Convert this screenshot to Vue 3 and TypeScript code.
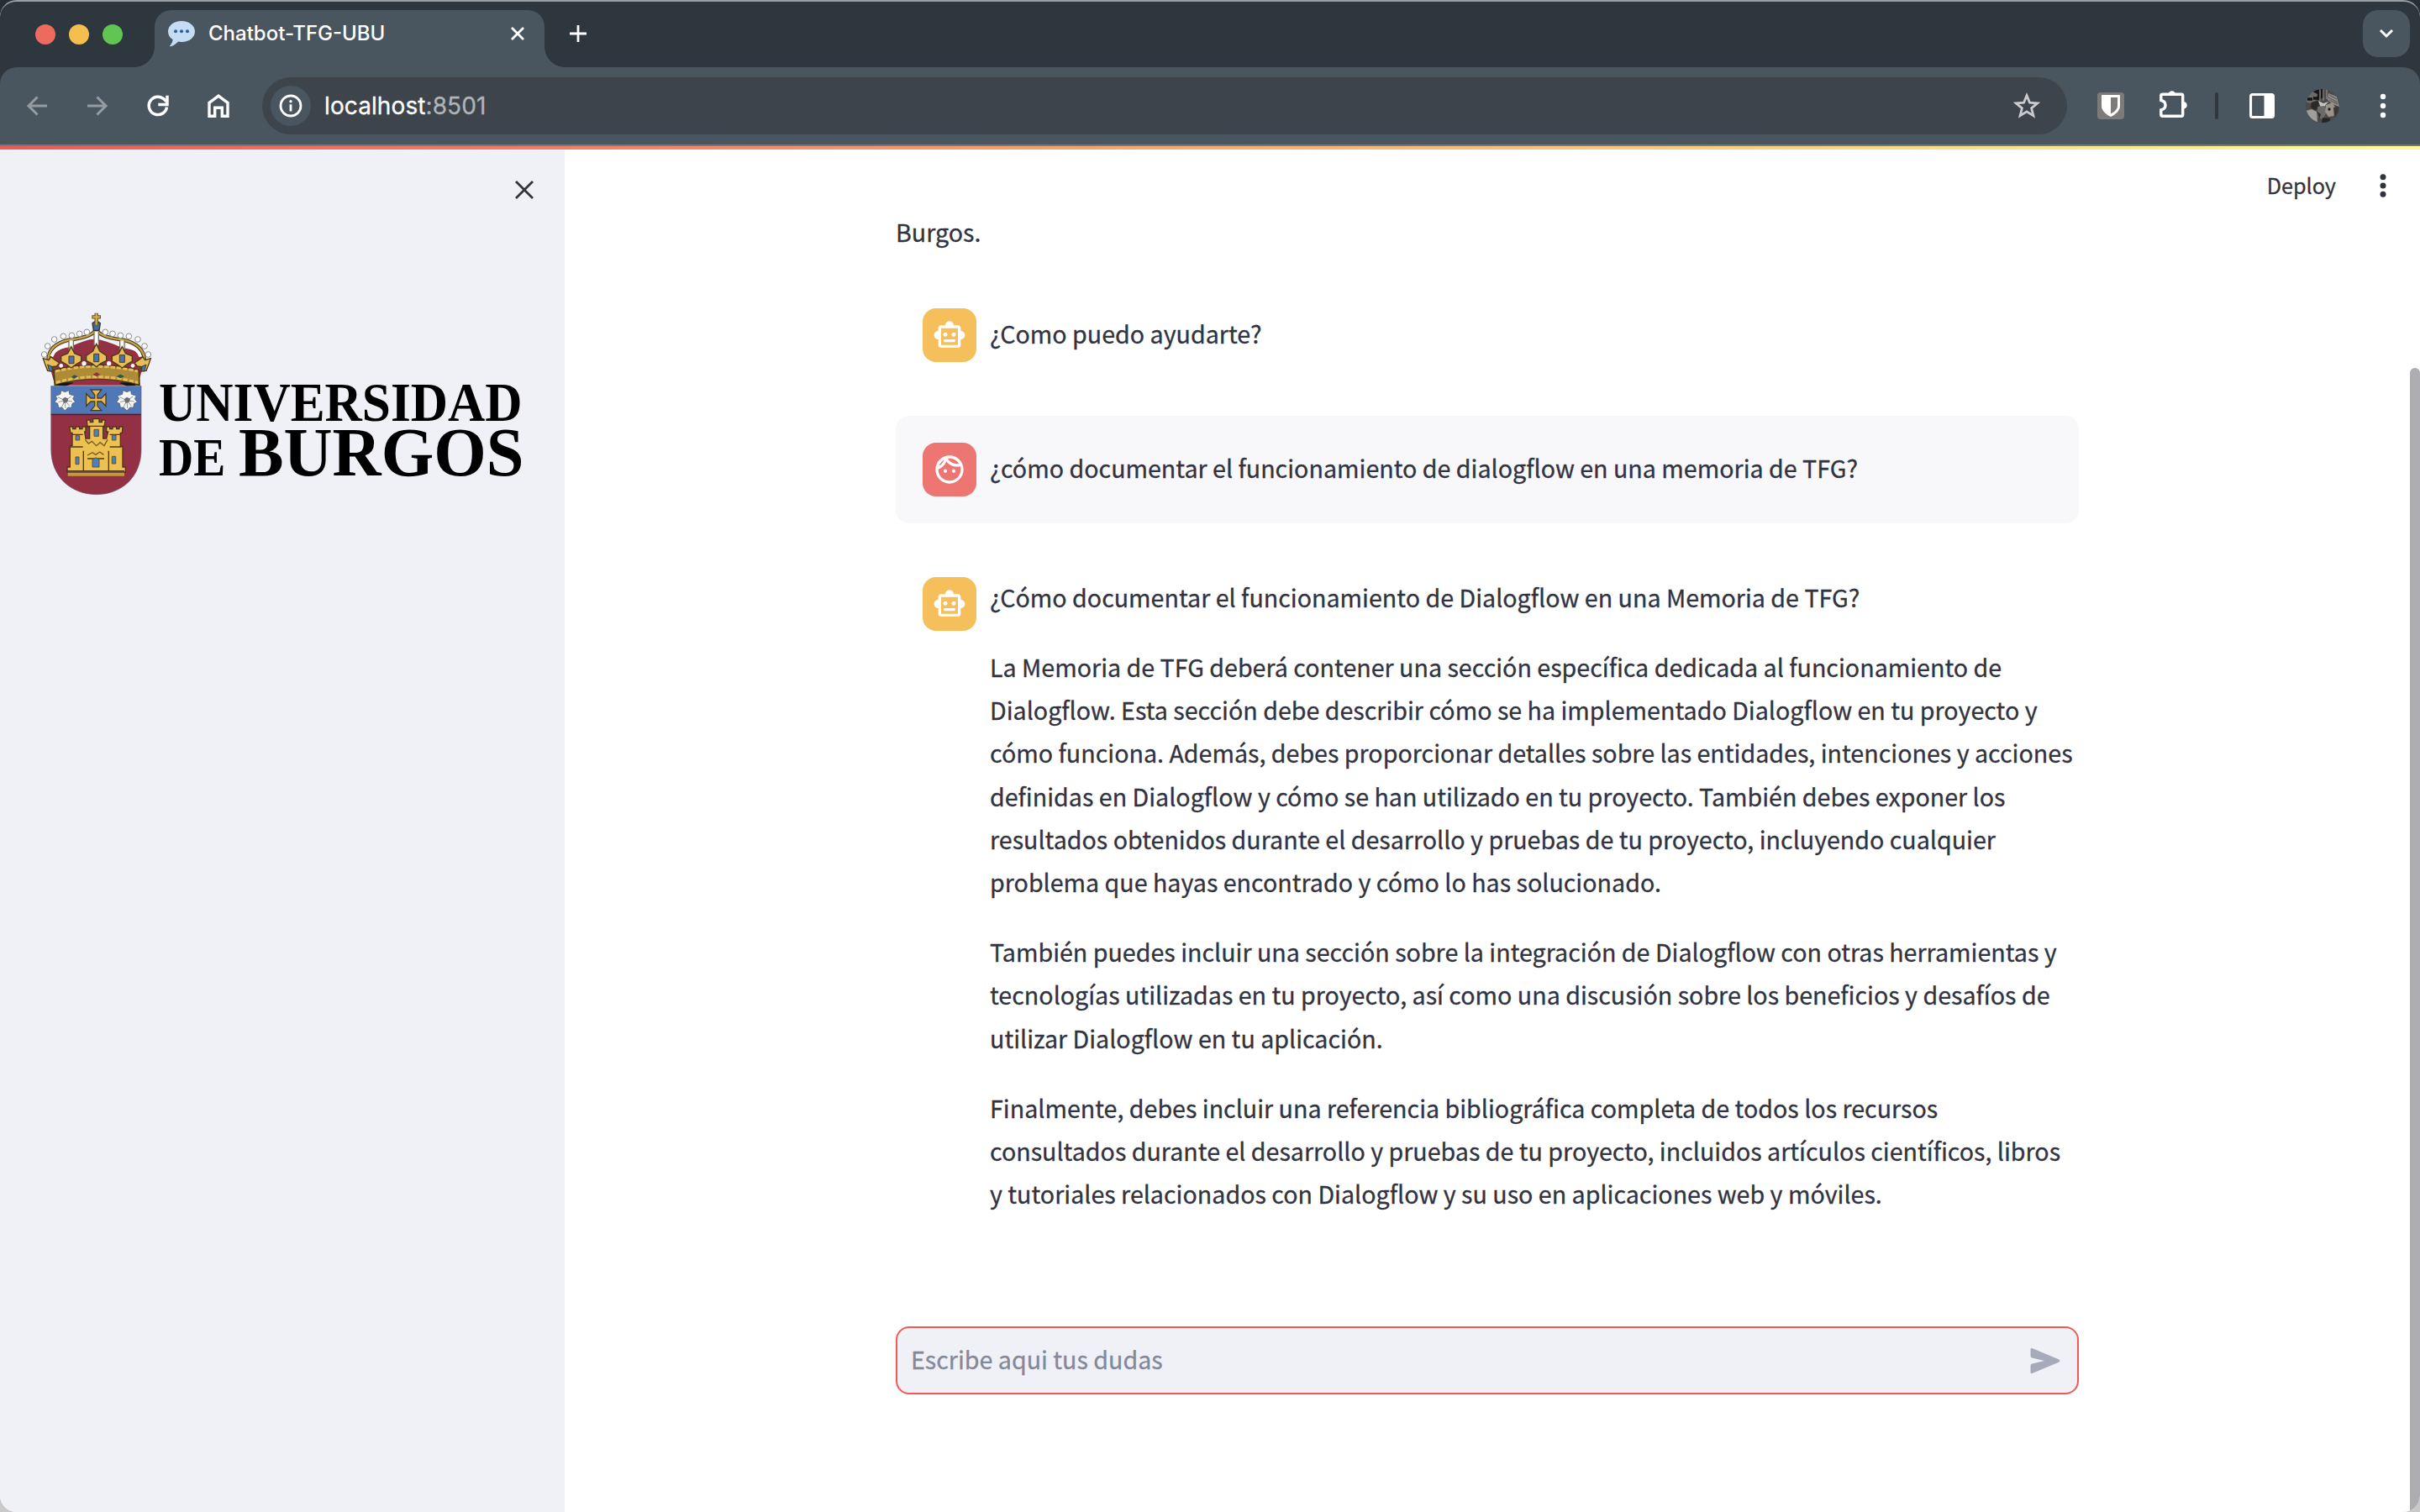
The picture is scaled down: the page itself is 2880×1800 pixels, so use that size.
<script setup lang="ts">
interface Message {
  role: 'assistant' | 'user'
  offset: 'single' | 'multi'
  paragraphs: string[][]
}

const messages: Message[] = [
  { role: 'assistant', offset: 'single', paragraphs: [['¿Como puedo ayudarte?']] },
  {
    role: 'user',
    offset: 'single',
    paragraphs: [['¿cómo documentar el funcionamiento de dialogflow en una memoria de TFG?']],
  },
  {
    role: 'assistant',
    offset: 'multi',
    paragraphs: [
      ['¿Cómo documentar el funcionamiento de Dialogflow en una Memoria de TFG?'],
      [
        'La Memoria de TFG deberá contener una sección específica dedicada al funcionamiento de',
        'Dialogflow. Esta sección debe describir cómo se ha implementado Dialogflow en tu proyecto y',
        'cómo funciona. Además, debes proporcionar detalles sobre las entidades, intenciones y acciones',
        'definidas en Dialogflow y cómo se han utilizado en tu proyecto. También debes exponer los',
        'resultados obtenidos durante el desarrollo y pruebas de tu proyecto, incluyendo cualquier',
        'problema que hayas encontrado y cómo lo has solucionado.',
      ],
      [
        'También puedes incluir una sección sobre la integración de Dialogflow con otras herramientas y',
        'tecnologías utilizadas en tu proyecto, así como una discusión sobre los beneficios y desafíos de',
        'utilizar Dialogflow en tu aplicación.',
      ],
      [
        'Finalmente, debes incluir una referencia bibliográfica completa de todos los recursos',
        'consultados durante el desarrollo y pruebas de tu proyecto, incluidos artículos científicos, libros',
        'y tutoriales relacionados con Dialogflow y su uso en aplicaciones web y móviles.',
      ],
    ],
  },
]

// Pearls along the two outer arches of the crown
const pearls: [number, number][] = [
  [70, 216], [82, 186], [106, 162], [138, 151], [168, 148], [196, 142], [222, 136],
  [288, 136], [314, 142], [342, 148], [372, 151], [404, 162], [428, 186], [441, 216],
]
</script>

<template>
  <div class="desktop">
    <div class="window">
      <header class="chrome">
        <div class="tabstrip">
          <div class="lights"><i class="red"></i><i class="yellow"></i><i class="green"></i></div>
          <div class="tab">
            <svg class="favicon" width="34" height="32" viewBox="0 0 34 32">
              <path d="M17 1C8 1 1 6.400 1 13.500c0 4 2 7.300 5.600 9.600C6.500 26 5 28.600 3 30.600c0 .8 1 .9 2 .5 3.600-1.300 6.300-3.300 8-5.500 1.300.2 2.600.4 4 .4 9 0 16-5.500 16-12.500S26 1 17 1z" fill="#c4dcf4" />
              <circle cx="10" cy="13.200" r="2" fill="#2f5c96" /><circle cx="17" cy="13.200" r="2" fill="#2f5c96" /><circle cx="24" cy="13.200" r="2" fill="#2f5c96" />
            </svg>
            <span class="tab-title">Chatbot-TFG-UBU</span>
            <svg class="tab-close" width="18" height="18" viewBox="0 0 18 18"><path d="M2 2l14 14M16 2L2 16" stroke="#fff" stroke-width="2.800" /></svg>
          </div>
          <svg class="new-tab" width="22" height="22" viewBox="0 0 22 22"><path d="M11 1v20M1 11h20" stroke="#fff" stroke-width="2.800" /></svg>
          <div class="tab-search">
            <svg width="20" height="14" viewBox="0 0 20 14"><path d="M3 3l7 7 7-7" fill="none" stroke="#fff" stroke-width="3" /></svg>
          </div>
        </div>
        <div class="toolbar">
          <div class="nav">
            <svg width="28" height="28" viewBox="0 0 28 28"><path d="M26 14H4M14.500 3.500L4 14l10.500 10.500" fill="none" stroke="#949ca2" stroke-width="3" /></svg>
            <svg width="28" height="28" viewBox="0 0 28 28"><path d="M2 14h22M13.500 3.500L24 14 13.500 24.500" fill="none" stroke="#949ca2" stroke-width="3" /></svg>
            <svg width="28" height="28" viewBox="0 0 28 28"><path d="M24.500 15.500A10.700 10.700 0 1 1 21.500 6.300L24.200 9" fill="none" stroke="#fff" stroke-width="3.500" /><path d="M25 1.800v10.600H14.300" fill="none" stroke="#fff" stroke-width="3.500" /></svg>
            <svg width="28" height="30" viewBox="0 0 28 30"><path d="M3 11.300L14 3.200l11 8.100V27.200h-6.700V17.200H9.700V27.200H3z" fill="none" stroke="#fff" stroke-width="3.400" /></svg>
          </div>
          <div class="omnibox">
            <span class="info">
              <svg width="28" height="28" viewBox="0 0 28 28"><circle cx="14" cy="14" r="12" fill="none" stroke="#fff" stroke-width="2.800" /><path d="M14 12.300v8.200" stroke="#fff" stroke-width="2.800" /><circle cx="14" cy="8.700" r="1.700" fill="#fff" /></svg>
            </span>
            <span class="url">localhost<em>:8501</em></span>
            <svg class="star" width="34" height="34" viewBox="0 0 34 34"><path fill="none" stroke="#c9cbcc" stroke-width="2.800" d="M17 4.600l3.500 8.600 9.200.7-7.100 5.900 2.300 9-7.900-4.900-7.900 4.900 2.300-9-7.100-5.900 9.200-.7z" /></svg>
          </div>
          <div class="extensions">
            <svg width="32" height="32" viewBox="0 0 32 32"><rect width="32" height="32" rx="4" fill="#7d7b79" /><path d="M5 3h22v13c0 6-5.500 10.500-11 13C10.500 26.500 5 22 5 16z" fill="#fff" /><path d="M16 6h8v10.300c0 4-4 7-8 9.200z" fill="#7d7b79" /></svg>
            <svg width="36" height="36" viewBox="0 0 36 36"><path d="M5.500 6.300h22.500q1.700 0 1.700 1.700v22.500q0 1.700-1.700 1.700H5.500q-1.700 0-1.700-1.700v-5.600c3.200-.7 5.200-2.500 5.200-5.700s-2-5-5.200-5.700V8q0-1.700 1.700-1.700z" fill="none" stroke="#fff" stroke-width="3.400" /><path d="M12.500 6.500a4.300 4.300 0 0 1 8.600 0zM30.500 15a4.300 4.300 0 0 1 0 8.600z" fill="#fff" /></svg>
            <span class="divider"></span>
            <svg width="30" height="30" viewBox="0 0 30 30"><rect x="1.500" y="1.500" width="27" height="27" rx="2.500" fill="none" stroke="#fff" stroke-width="3.200" /><path d="M17.500 1.500h10v27h-10z" fill="#fff" /></svg>
            <svg class="profile" width="40" height="40" viewBox="0 0 40 40">
              <defs><clipPath id="profile-clip"><circle cx="20" cy="20" r="20" /></clipPath></defs>
              <g clip-path="url(#profile-clip)">
                <rect width="40" height="40" fill="#4b4a49" />
                <path d="M10 0h12v9l-6 4-8-3z" fill="#171717" /><path d="M0 8l8-5 6 3-1 7-8 4-5-2z" fill="#6e6c6a" />
                <path d="M2 12h6M9 11h6" stroke="#141414" stroke-width="3.500" />
                <path d="M7 16l8-2 1 8-5 3-5-3z" fill="#2a2929" /><path d="M17 0v14M21 0v14M25 0v12" stroke="#807e7c" stroke-width="1.500" />
                <path d="M27 5l10 4 3 12-8-3-6-5z" fill="#8f8d8b" /><path d="M28 7l9 5M27 10l11 6M28 13l10 5" stroke="#555" stroke-width="1" />
                <path d="M0 26l7-2 6 3 1 13H4z" fill="#a09e9c" /><path d="M15 14l6 3 6-2-5 6-4 1z" fill="#c5c3c1" />
                <path d="M14 21l8-1 3 6-4 10-7-2z" fill="#6c6a68" /><path d="M24 19l8-3 4 8-2 8-7 1-4-6z" fill="#99928b" />
                <circle cx="28" cy="24" r="1.700" fill="#1c1c1c" /><path d="M14 27l4 3-2 6z" fill="#2b2b2b" /><path d="M33 22l6-1v9l-5 4z" fill="#393837" /><path d="M20 34l9 1-1 5h-9z" fill="#262525" />
              </g>
            </svg>
            <svg class="kebab" width="8" height="30" viewBox="0 0 8 30"><circle cx="4" cy="4" r="3.200" fill="#fff" /><circle cx="4" cy="15" r="3.200" fill="#fff" /><circle cx="4" cy="26" r="3.200" fill="#fff" /></svg>
          </div>
        </div>
        <div class="decoration"></div>
      </header>

      <div class="page">
        <aside class="sidebar">
          <svg class="sidebar-close" width="24" height="24" viewBox="0 0 24 24"><path d="M2 2l20 20M22 2L2 22" stroke="#31333f" stroke-width="2.800" /></svg>
          <svg class="logo" width="583.330" height="220" viewBox="50 60 1750 660">
            <!-- crown -->
            <path d="M106 318L84 240Q92 200 160 190Q230 156 256 162Q284 164 348 192Q420 202 430 236L404 322Q256 292 106 318z" fill="#943044" />
            <path d="M84 236Q86 180 158 164Q230 156 252 132M428 236Q424 180 352 164Q280 156 258 132" fill="none" stroke="#3c3420" stroke-width="13" />
            <path d="M84 236Q86 180 158 164Q230 156 252 132M428 236Q424 180 352 164Q280 156 258 132" fill="none" stroke="#c9a545" stroke-width="7" />
            <path d="M96 224Q104 196 150 184M414 224Q406 196 362 184" fill="none" stroke="#fff" stroke-width="11" />
            <path d="M166 166V200M348 166V200M256 134V182" stroke="#77705b" stroke-width="20" />
            <path d="M166 166V200M348 166V200M256 134V182" stroke="#fff" stroke-width="12" />
            <circle v-for="(p, i) in pearls" :key="i" :cx="p[0]" :cy="p[1]" r="10" fill="#fff" stroke="#8c8c8e" stroke-width="3" />
            <path d="M242 104q14-12 28 0l-4 26h-20z" fill="#416ba5" stroke="#32312d" stroke-width="4" />
            <path d="M256 68v44M240 82h32" stroke="#655020" stroke-width="13" /><path d="M256 70v40M243 82h26" stroke="#d6ac4c" stroke-width="7" />
            <path d="M104 272Q256 234 408 272L410 326Q256 284 108 326z" fill="#ad8b37" stroke="#483818" stroke-width="5" />
            <path d="M110 276Q256 242 404 276M112 316Q256 276 404 316" fill="none" stroke="#e5bc58" stroke-width="9" stroke-dasharray="16 6" />
            <g fill="#e9bd55" stroke="#4c3a17" stroke-width="4">
              <path d="M166 188l12 24 24 10v18l-20 12-16 12-16-12-20-12v-18l24-10z" /><path d="M256 178l12 26 24 16v18l-20 10-16 12-16-12-20-10v-18l24-16z" /><path d="M348 188l12 24 24 10v18l-20 12-16 12-16-12-20-12v-18l24-10z" />
              <path d="M66 230l20 6 8-12 12 10 18 12-10 12-16 2 2 16-18-2-10-26z" /><path d="M450 230l-20 6-8-12-12 10-18 12 10 12 16 2-2 16 18-2 10-26z" />
            </g>
            <g fill="#4b73ad" stroke="#473c24" stroke-width="3"><path d="M158 222h18v26h-18zM247 214h18v28h-18zM339 218h18v26h-18zM82 252l14 6 4 16-12 2zM434 252l-14 6-4 16 12 2z" /></g>
            <circle cx="212" cy="248" r="8" fill="#fff" /><circle cx="301" cy="248" r="8" fill="#fff" /><circle cx="130" cy="256" r="7" fill="#fff" /><circle cx="386" cy="256" r="7" fill="#fff" />
            <path d="M166 296l12-7 12 6-12 7zM328 294l14-7 14 7-14 7z" fill="#23594a" /><path d="M244 287l13-7 13 7-13 8z" fill="#943044" />
            <path d="M118 326Q256 284 398 326z" fill="#943044" /><path d="M112 327q22-14 64-10l-30 12zM400 327q-22-14-64-10l30 12z" fill="#161512" />
            <!-- shield -->
            <path d="M94 428h322v128c0 98-70 160-160 160S94 654 94 556z" fill="#943044" />
            <path d="M94 328h322v100H94z" fill="#4f78b8" /><path d="M94 430h322" stroke="#41213a" stroke-width="5" />
            <path d="M95 328V556c0 98 72 160 161 160s160-62 160-160V328" fill="none" stroke="#6d5266" stroke-width="2" />
            <g v-for="x in [144, 365]" :key="x" :transform="`translate(${x} 380)`">
              <path d="M-14-36l14 6 14-6 2 14 18 6-6 10 9 12-11 5-3 15-12-1-11 12-11-12-12 1-3-15-11-5 9-12-6-10 18-6z" fill="#f6f6f6" stroke="#5c5f66" stroke-width="2.500" />
              <path d="M0 0L-26-12M0 0L-24 6M0 0l-12 24M0 0l2 28M0 0l16 20M0 0l26 4M0 0l22-14" stroke="#999" stroke-width="3" />
              <path d="M-10-4l10-8 12 6-4 12-12 4z" fill="#6d6d6d" />
            </g>
            <path d="M236 342h38l-14 18v12h14l16-16v44l-16-16h-14v16l14 16h-38l14-16v-16h-14l-16 16v-44l16 16h14v-12z" fill="#e6b850" stroke="#463b24" stroke-width="4" />
            <!-- castle -->
            <g fill="#ecc051" stroke="#4a371a" stroke-width="4">
              <path d="M222 450h12v8h10v-12h22v12h10v-8h12l-4 24h-4v42h12l6-24h-6v-18h12v8h10v-8h14v8h10v-8h12l-2 22h-6v48h8v74h10v18H152v-18h10v-76h8v-46h-6l-4-22h12v8h10v-8h14v8h10v-8h12v18h-4l4 24h14v-42h-8z" />
              <path d="M162 546h46M304 546h42M152 632h204M170 502h38M304 502h38M222 472h66M210 560v70M300 560v70M224 588h60" fill="none" />
            </g>
            <path d="M216 520l12 14 12-8 16 16 14-12 14 12 12-22M224 576l18-10 12 8 14-10 14 10" fill="none" stroke="#7a5a23" stroke-width="4" />
            <path d="M154 638h202v12H154z" fill="#c6993e" />
            <g fill="#4f7fbd" stroke="#5f5232" stroke-width="3"><path d="M248 484h16v24h-16zM182 506h14v16h-14zM312 504h14v18h-14zM182 582h12v26h-12zM312 580h13v26h-13zM242 618v-26q12-14 24 0v26z" /></g>
            <!-- wordmark -->
            <g class="wordmark">
              <text x="479" y="454" font-size="194" textLength="1298" lengthAdjust="spacingAndGlyphs">UNIVERSIDAD</text>
              <text x="479" y="648" font-size="190" textLength="238" lengthAdjust="spacingAndGlyphs">DE</text>
              <text x="764" y="648" font-size="246" textLength="1018" lengthAdjust="spacingAndGlyphs">BURGOS</text>
            </g>
          </svg>
        </aside>

        <main class="main">
          <div class="app-menu">
            <span>Deploy</span>
            <svg width="8" height="30" viewBox="0 0 8 30"><circle cx="4" cy="4.700" r="3.500" fill="#31333f" /><circle cx="4" cy="15" r="3.500" fill="#31333f" /><circle cx="4" cy="25.300" r="3.500" fill="#31333f" /></svg>
          </div>
          <p class="intro">Burgos.</p>
          <section class="chat">
            <article v-for="(m, i) in messages" :key="i" class="message" :class="[m.role, m.offset]">
              <div class="avatar">
                <svg v-if="m.role === 'assistant'" width="40" height="40" viewBox="0 0 24 24" fill="#fff"><path d="M20 9V7c0-1.100-.9-2-2-2h-3c0-1.660-1.340-3-3-3S9 3.340 9 5H6c-1.100 0-2 .9-2 2v2c-1.660 0-3 1.340-3 3s1.340 3 3 3v4c0 1.100.9 2 2 2h12c1.100 0 2-.9 2-2v-4c1.660 0 3-1.340 3-3s-1.340-3-3-3zm-2 10H6V7h12v12zm-9-6c-.83 0-1.500-.67-1.500-1.500S8.170 10 9 10s1.500.67 1.500 1.500S9.830 13 9 13zm7.500-1.500c0 .83-.67 1.500-1.500 1.500s-1.500-.67-1.500-1.500.67-1.500 1.500-1.500 1.500.67 1.500 1.500zM8 15h8v2H8v-2z" /></svg>
                <svg v-else width="40" height="40" viewBox="0 0 24 24" fill="#fff"><path d="M10.250 13c0 .69-.56 1.250-1.250 1.250S7.750 13.690 7.750 13s.56-1.250 1.250-1.250 1.250.56 1.250 1.250zM15 11.750c-.69 0-1.250.56-1.250 1.250s.56 1.250 1.250 1.250 1.250-.56 1.250-1.250-.56-1.250-1.250-1.250zm7 .25c0 5.520-4.480 10-10 10S2 17.520 2 12 6.480 2 12 2s10 4.480 10 10zM10.660 4.120C12.060 6.440 14.600 8 17.500 8c.46 0 .91-.05 1.340-.12C17.440 5.560 14.900 4 12 4c-.46 0-.91.05-1.340.12zM4.420 9.470c1.710-.97 3.030-2.550 3.660-4.440C6.370 6 5.050 7.580 4.420 9.470zM20 12c0-.78-.12-1.530-.33-2.240-.7.150-1.420.24-2.170.24-3.130 0-5.920-1.440-7.760-3.690C8.690 8.870 6.600 10.880 4 11.860c.01.04 0 .09 0 .14 0 4.420 3.580 8 8 8s8-3.580 8-8z" /></svg>
              </div>
              <div class="text">
                <p v-for="(lines, j) in m.paragraphs" :key="j"><span v-for="(line, k) in lines" :key="k" class="line">{{ line }}</span></p>
              </div>
            </article>
          </section>
          <div class="composer">
            <span>Escribe aqui tus dudas</span>
            <svg width="36" height="32" viewBox="0 0 36 32"><path d="M.5 2.600Q.5.200 2.900 1.200L34 14.300Q36.800 16 34 17.700L2.900 30.800Q.5 31.800.5 29.400V21.800Q.5 20 2.300 19.600L17 16 2.300 12.400Q.5 12 .5 10.200z" fill="#a6aabb" /></svg>
          </div>
          <div class="scrollbar"></div>
        </main>
      </div>
    </div>
  </div>
</template>

<style>
html,
body {
  margin: 0;
  overflow: hidden;
}
</style>

<style scoped>
.desktop {
  width: 2880px;
  height: 1800px;
  background: linear-gradient(#262d33 0 50%, #c9c9ca 50%);
}
.window {
  position: relative;
  box-sizing: border-box;
  width: 2880px;
  height: 1800px;
  overflow: hidden;
  border-radius: 20px;
  display: flex;
  flex-direction: column;
  background: #fff;
}
svg {
  display: block;
  flex: none;
}
.chrome {
  flex: none;
  background: #2f373e;
}
.tabstrip {
  box-sizing: border-box;
  height: 80px;
  border-top: 2px solid #9a9fa3;
  border-radius: 20px 20px 0 0;
  display: flex;
  align-items: flex-start;
  padding: 10px 12px 0 42px;
}
.lights {
  display: flex;
  gap: 16px;
  width: 142px;
  padding-top: 17px;
}
.lights i {
  width: 24px;
  height: 24px;
  border-radius: 50%;
}
.red { background: #ed6a5e; }
.yellow { background: #f5bf4f; }
.green { background: #61c554; }
.tab {
  position: relative;
  box-sizing: border-box;
  width: 464px;
  height: 68px;
  padding: 0 23px 25px 15px;
  display: flex;
  align-items: center;
  border-radius: 20px 20px 0 0;
  background: #49565f;
}
.tab::before,
.tab::after {
  content: '';
  position: absolute;
  bottom: 0;
  width: 24px;
  height: 24px;
}
.tab::before {
  left: -24px;
  background: radial-gradient(circle at 0 0, transparent 23.500px, #49565f 24px);
}
.tab::after {
  right: -24px;
  background: radial-gradient(circle at 100% 0, transparent 23.500px, #49565f 24px);
}
.favicon { margin-top: 13px; }
.tab-title {
  flex: 1;
  margin: 13px 0 0 15px;
  font: 500 24px/30px Inter, sans-serif;
  color: #fff;
  white-space: nowrap;
}
.tab-close { margin-top: 13px; }
.new-tab { margin: 17px 0 0 29px; }
.tab-search {
  margin-left: auto;
  width: 56px;
  height: 56px;
  border-radius: 18px;
  background: #49565f;
  display: flex;
  align-items: center;
  justify-content: center;
}
.toolbar {
  box-sizing: border-box;
  height: 94px;
  padding: 12px 40px 12px 30px;
  border-bottom: 2px solid #6f7a83;
  border-radius: 20px 20px 0 0;
  background: #49565f;
  display: flex;
  align-items: center;
}
.nav {
  flex: none;
  display: flex;
  align-items: center;
  gap: 44px;
  width: 282px;
}
.omnibox {
  flex: none;
  box-sizing: border-box;
  width: 2148px;
  height: 68px;
  padding: 0 31px 0 10px;
  border-radius: 34px;
  background: #3d444c;
  display: flex;
  align-items: center;
}
.info {
  width: 48px;
  height: 48px;
  border-radius: 50%;
  background: #49565f;
  display: flex;
  align-items: center;
  justify-content: center;
}
.url {
  flex: 1;
  margin-left: 16px;
  font: 400 28px/40px Inter, sans-serif;
  letter-spacing: 0.1px;
  -webkit-text-stroke: 0.3px;
  color: #fff;
  white-space: nowrap;
}
.url em {
  font-style: normal;
  color: #b0b4b7;
}
.extensions {
  display: flex;
  align-items: center;
  flex: 1;
  padding-left: 36px;
}
.extensions svg:nth-child(2) { margin: -4px 0 0 40px; }
.divider {
  width: 4px;
  height: 32px;
  margin: 0 37px 0 32px;
  border-radius: 2px;
  background: #2f373e;
}
.profile { margin-left: 37px; }
.kebab { margin-left: 48px; }
.decoration {
  height: 4px;
  background: linear-gradient(90deg, #ed5a55, #fdfd8f);
}
.page {
  flex: 1;
  min-height: 0;
  display: flex;
}
.sidebar {
  box-sizing: border-box;
  width: 672px;
  padding-top: 36px;
  background: #f0f1f6;
}
.sidebar-close { margin-left: 612px; }
.logo {
  margin: 132px 0 0 46.300px;
  overflow: visible;
}
.wordmark {
  font-family: 'Liberation Serif', serif;
  font-weight: 700;
  fill: #000;
}
.main {
  position: relative;
  box-sizing: border-box;
  flex: 1;
  padding: 72px 0 140px 394px;
  display: flex;
  flex-direction: column;
  font: 400 28.640px/51.200px 'Noto Sans CJK SC', sans-serif;
  -webkit-text-stroke: 0.3px;
  color: #31333f;
}
.app-menu {
  position: absolute;
  top: 28px;
  right: 40px;
  display: flex;
  align-items: center;
  gap: 52px;
  font-size: 25.200px;
  line-height: 32px;
}
.app-menu span { margin-top: -2px; }
.intro {
  margin: 0 0 34px;
}
.chat {
  display: flex;
  flex-direction: column;
  gap: 32px;
  width: 1408px;
}
.message {
  box-sizing: border-box;
  padding: 32px;
  display: flex;
  gap: 16px;
  border-radius: 16px;
}
.message.single { height: 128px; }
.message.user { background: #f8f8fb; }
.avatar {
  flex: none;
  width: 64px;
  height: 64px;
  border-radius: 16px;
  display: flex;
  align-items: center;
  justify-content: center;
  background: #f5bf5c;
}
.user .avatar { background: #ed7572; }
.single .text { margin-top: 4px; }
.multi .text { margin-top: -2.500px; }
.text p { margin: 0 0 32px; }
.line {
  display: block;
  white-space: nowrap;
}
.composer {
  box-sizing: border-box;
  width: 1408px;
  height: 81px;
  margin-top: auto;
  padding: 0 20px 0 16px;
  border: 2px solid #f15a54;
  border-radius: 16px;
  background: #f0f1f6;
  color: #84889b;
  display: flex;
  align-items: center;
  justify-content: space-between;
}
.composer span { margin-top: -3px; }
.scrollbar {
  position: absolute;
  right: 0;
  top: 260px;
  bottom: 0;
  width: 12px;
  border-radius: 6px 6px 0 0;
  background: #adadb2;
}
</style>
